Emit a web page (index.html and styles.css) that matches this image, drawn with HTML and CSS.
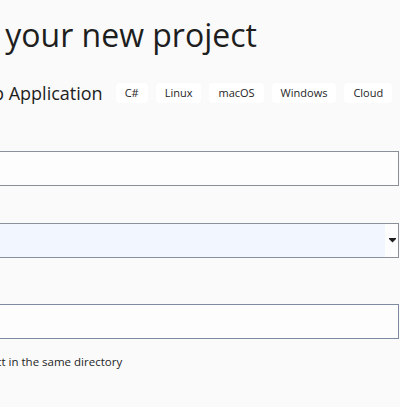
FILE: index.html
```html
<!DOCTYPE html>
<html lang="en">
<head>
  <meta charset="UTF-8" />
  <title>Configure your new project</title>
  <link rel="stylesheet" href="styles.css">
</head>
<body>
  <div class="page">
    <h1 class="page-title">Configure your new project</h1>

    <div class="template-row">
      <span class="template-name">ASP.NET Core Web Application</span>
      <span class="tag">C#</span>
      <span class="tag">Linux</span>
      <span class="tag">macOS</span>
      <span class="tag">Windows</span>
      <span class="tag">Cloud</span>
      <span class="tag">Service</span>
      <span class="tag">Web</span>
    </div>

    <label class="field-label first" for="projectName">Project name</label>
    <input class="field-input" id="projectName" type="text">

    <label class="field-label second" for="location">Location</label>
    <div class="combo" id="location">
      <div class="combo-value"></div>
      <div class="combo-btn">
        <svg width="7" height="5" viewBox="0 0 7 5"><rect x="0" y="0" width="7" height="1" fill="#1e1e1e"/><path d="M0 1 L7 1 L3.5 4.5 Z" fill="#1e1e1e"/></svg>
      </div>
    </div>

    <label class="field-label third" for="solutionName">Solution name</label>
    <input class="field-input solution" id="solutionName" type="text">

    <div class="check-row">
      <span class="check-box"></span>
      <span class="check-text">Place solution and project in the same directory</span>
    </div>
  </div>
</body>
</html>
```

FILE: styles.css
```css
* {
  box-sizing: border-box;
}

html, body {
  margin: 0;
  background: #fafafa;
  overflow: hidden;
}

body {
  font-family: 'Segoe UI', 'Open Sans', sans-serif;
  color: #1e1e1e;
  width: 400px;
  height: 407px;
}

.page {
  margin-left: -152px;
  width: 551px;
  padding-top: 15px;
}

.page-title {
  margin: 0;
  padding-left: 3px;
  font-size: 32px;
  font-weight: 400;
  line-height: 40px;
  white-space: nowrap;
}

.template-row {
  display: flex;
  align-items: center;
  gap: 8px;
  margin-top: 26px;
  height: 24px;
  white-space: nowrap;
}

.template-name {
  font-size: 18px;
  line-height: 24px;
  margin-left: -1px;
  margin-right: 5px;
}

.tag {
  background: #fff;
  border-radius: 4px;
  font-size: 11px;
  line-height: 20px;
  height: 20px;
  padding: 0 9px;
}

.field-label {
  display: block;
  font-size: 14px;
  line-height: 20px;
  margin-bottom: 10px;
}

.field-label.first {
  margin-top: 16px;
}

.field-label.second {
  margin-top: 12px;
  margin-bottom: 5px;
}

.field-label.third {
  margin-top: 21px;
  margin-bottom: 5px;
}

.field-input {
  display: block;
  width: 100%;
  height: 35px;
  margin: 0;
  border: 1px solid #8a909a;
  background: #fdfdfd;
  outline: none;
  font: inherit;
}

.field-input.solution {
  border-color: #7d8aa0;
}

.combo {
  display: flex;
  height: 35px;
  border: 1px solid #8a909a;
  background: #fdfdfd;
}

.combo-value {
  flex: 1;
  background: #f2f6fe;
}

.combo-btn {
  width: 13px;
  display: flex;
  align-items: center;
  justify-content: center;
  padding-left: 1px;
}

.check-row {
  display: flex;
  align-items: center;
  gap: 8px;
  margin-top: 14px;
  margin-left: -7px;
  height: 18px;
}

.check-box {
  width: 18px;
  height: 18px;
  border: 1px solid #1e1e1e;
  background: #fff;
}

.check-text {
  font-size: 11.5px;
  line-height: 18px;
  white-space: nowrap;
}
```
